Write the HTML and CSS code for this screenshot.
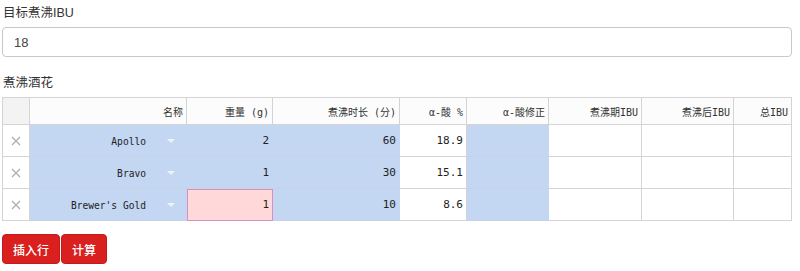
FILE: index.html
```html
<!DOCTYPE html>
<html lang="zh">
<head>
    <meta charset="UTF-8">
    <title>煮沸IBU计算</title>
    <link rel="stylesheet" href="styles.css">
</head>
<body>

    <!-- 目标IBU -->
    <div class="field">
        <label class="field-label" for="target">目标煮沸IBU</label>
        <input type="text" id="target" class="field-input" value="18">
    </div>

    <!-- 酒花表格 -->
    <div class="field">
        <div class="field-label">煮沸酒花</div>
        <table class="hops">
            <colgroup>
                <col class="c-del"><col class="c-name"><col class="c-weight"><col class="c-time">
                <col class="c-alpha"><col class="c-fix"><col class="c-ibu1"><col class="c-ibu2"><col class="c-total">
            </colgroup>
            <thead>
                <tr>
                    <th class="corner"></th>
                    <th>名称</th>
                    <th>重量 (g)</th>
                    <th>煮沸时长 (分)</th>
                    <th>α-酸 %</th>
                    <th>α-酸修正</th>
                    <th>煮沸期IBU</th>
                    <th>煮沸后IBU</th>
                    <th>总IBU</th>
                </tr>
            </thead>
            <tbody>
                <tr>
                    <td class="del"><svg width="10" height="10" viewBox="0 0 10 10"><path d="M1 1L9 9M9 1L1 9" stroke="#aaa" stroke-width="1.1"/></svg></td>
                    <td class="sel name"><span>Apollo</span><i class="arrow"></i></td>
                    <td class="sel">2</td>
                    <td class="sel">60</td>
                    <td>18.9</td>
                    <td class="sel"></td>
                    <td></td>
                    <td></td>
                    <td></td>
                </tr>
                <tr>
                    <td class="del"><svg width="10" height="10" viewBox="0 0 10 10"><path d="M1 1L9 9M9 1L1 9" stroke="#aaa" stroke-width="1.1"/></svg></td>
                    <td class="sel name"><span>Bravo</span><i class="arrow"></i></td>
                    <td class="sel">1</td>
                    <td class="sel">30</td>
                    <td>15.1</td>
                    <td class="sel"></td>
                    <td></td>
                    <td></td>
                    <td></td>
                </tr>
                <tr>
                    <td class="del"><svg width="10" height="10" viewBox="0 0 10 10"><path d="M1 1L9 9M9 1L1 9" stroke="#aaa" stroke-width="1.1"/></svg></td>
                    <td class="sel name"><span>Brewer's Gold</span><i class="arrow"></i></td>
                    <td class="current">1</td>
                    <td class="sel">10</td>
                    <td>8.6</td>
                    <td class="sel"></td>
                    <td></td>
                    <td></td>
                    <td></td>
                </tr>
            </tbody>
        </table>
    </div>

    <div class="actions">
        <button class="btn">插入行</button>
        <button class="btn">计算</button>
    </div>

</body>
</html>
```

FILE: styles.css
```css
body {
    margin: 0;
    padding: 2px 8px 0 2px;
    font-family: "Liberation Sans", "Noto Sans CJK SC", sans-serif;
    font-size: 12.5px;
    color: #333;
    background: #fff;
}

.field {
    margin-bottom: 13px;
}

.field-label {
    display: block;
    line-height: 18px;
    margin: 2px 0 5px 1px;
}

.field-input {
    display: block;
    width: 100%;
    height: 30px;
    box-sizing: border-box;
    padding: 0 11px;
    font-family: inherit;
    font-size: 13px;
    color: #444;
    border: 1px solid #c8c8c8;
    border-radius: 4px;
    margin-bottom: 17px;
}

/* 表格 */
.hops {
    border-collapse: collapse;
    table-layout: fixed;
    width: 789px;
    font-family: "DejaVu Sans Mono", "Noto Sans CJK SC", monospace;
    font-size: 10px;
    color: #222;
    margin-top: 1px;
}

.c-del { width: 27px; }
.c-name { width: 157px; }
.c-weight { width: 86px; }
.c-time { width: 127px; }
.c-alpha { width: 67px; }
.c-fix { width: 82px; }
.c-ibu1 { width: 93px; }
.c-ibu2 { width: 92px; }
.c-total { width: 58px; }

.hops th,
.hops td {
    border: 1px solid #d4d4d4;
    text-align: right;
    padding: 0 3px 0 4px;
    white-space: nowrap;
    overflow: hidden;
}

.hops th {
    height: 26px;
    font-weight: normal;
    color: #333;
    background: #fcfcfc;
}

.hops th.corner {
    background: #f3f3f3;
}

.hops td {
    height: 31px;
    font-size: 11px;
}

.hops td.del {
    text-align: center;
    padding: 0;
}

.hops td.del svg {
    display: block;
    margin: 0 auto;
}

.hops td.sel {
    background: #c3d6f2;
    border-color: #c6d3e6 #c3d6f2;
}

.hops td.name {
    padding-right: 11px;
    font-size: 9.6px;
}

.hops td.name span {
    vertical-align: middle;
}

.arrow {
    display: inline-block;
    width: 0;
    height: 0;
    margin-left: 21px;
    vertical-align: middle;
    border-left: 4px solid transparent;
    border-right: 4px solid transparent;
    border-top: 4px solid #eef3fb;
}

.hops td.current {
    background: #ffd9d9;
    outline: 1px solid #d98fc0;
    outline-offset: -1px;
}

/* 按钮 */
.actions {
    display: flex;
    gap: 1px;
}

.btn {
    height: 30px;
    padding: 0 10px;
    font-family: "Noto Sans CJK SC", sans-serif;
    font-size: 12px;
    font-weight: 500;
    color: #fff;
    background: #d9201f;
    border: 1px solid #c21b1b;
    border-radius: 4px;
    cursor: pointer;
}
```
